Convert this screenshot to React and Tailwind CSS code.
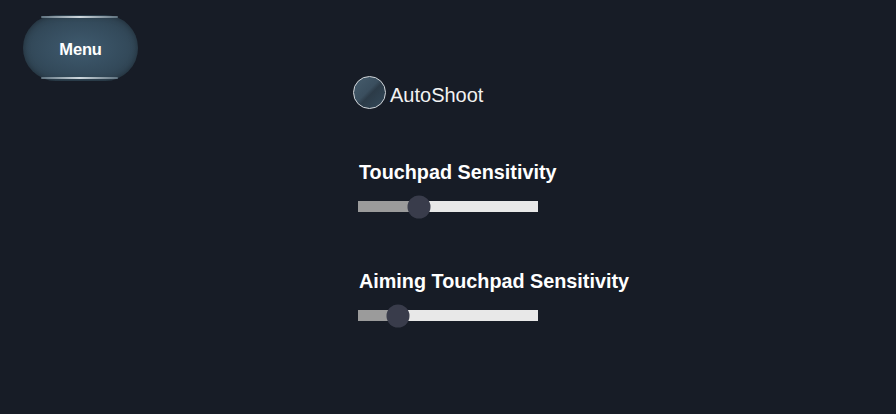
import React, { useState } from "react";

const Slider = ({ value }) => {
  return (
    <div className="relative mt-[17px] h-[11px] w-[180px] bg-[#e8e8e8]">
      <div className="h-full bg-[#9b9b9b]" style={{ width: `${value}%` }} />
      <div
        className="absolute top-1/2 h-[23px] w-[23px] -translate-x-1/2 -translate-y-1/2 rounded-full bg-[#393c4b]"
        style={{ left: `${value}%` }}
      />
    </div>
  );
};

const App = () => {
  const [autoShoot] = useState(false);

  return (
    <div
      className="relative h-[414px] w-[896px] overflow-hidden bg-[#171c26] text-white"
      style={{ fontFamily: '"Liberation Sans", Arial, sans-serif' }}
    >
      <button className="absolute left-[23px] top-[15px] flex h-[66px] w-[115px] items-center justify-center rounded-full bg-[radial-gradient(ellipse_at_center,#3f5a6e_0%,#344b5c_55%,#2a3b48_100%)] shadow-[inset_0_0_6px_rgba(0,0,0,0.35)]">
        <span className="absolute left-[18px] right-[20px] top-[1px] h-[2px] rounded-full bg-[linear-gradient(90deg,#5f727f,#cfd8de_50%,#5f727f)]" />
        <span className="absolute bottom-[2px] left-[18px] right-[20px] h-[2px] rounded-full bg-[linear-gradient(90deg,#5f727f,#cfd8de_50%,#5f727f)]" />
        <span className="mt-[2px] text-[16.5px] font-bold tracking-[-0.2px]">Menu</span>
      </button>

      <div className="flex flex-col pl-[359px] pt-[75px]">
        <div className="-ml-[6px] flex items-center gap-[4px]">
          <div
            className={`h-[33px] w-[33px] rounded-full border-[1.5px] border-[#d4d8dc] ${
              autoShoot ? "bg-[#5a8bb0]" : "bg-[linear-gradient(135deg,#465c6c_0%,#3a4e5e_45%,#2c3b48_55%,#34495a_100%)]"
            }`}
          />
          <span className="mt-[5px] text-[20px] text-[#f2f2f2]">AutoShoot</span>
        </div>

        <div className="mt-[50px] text-[19.8px] font-bold leading-[24px]">Touchpad Sensitivity</div>
        <div className="-ml-[1px]">
          <Slider value={34} />
        </div>

        <div className="mt-[57px] text-[19.8px] font-bold leading-[24px]">Aiming Touchpad Sensitivity</div>
        <div className="-ml-[1px]">
          <Slider value={22} />
        </div>
      </div>
    </div>
  );
};

export default App;
